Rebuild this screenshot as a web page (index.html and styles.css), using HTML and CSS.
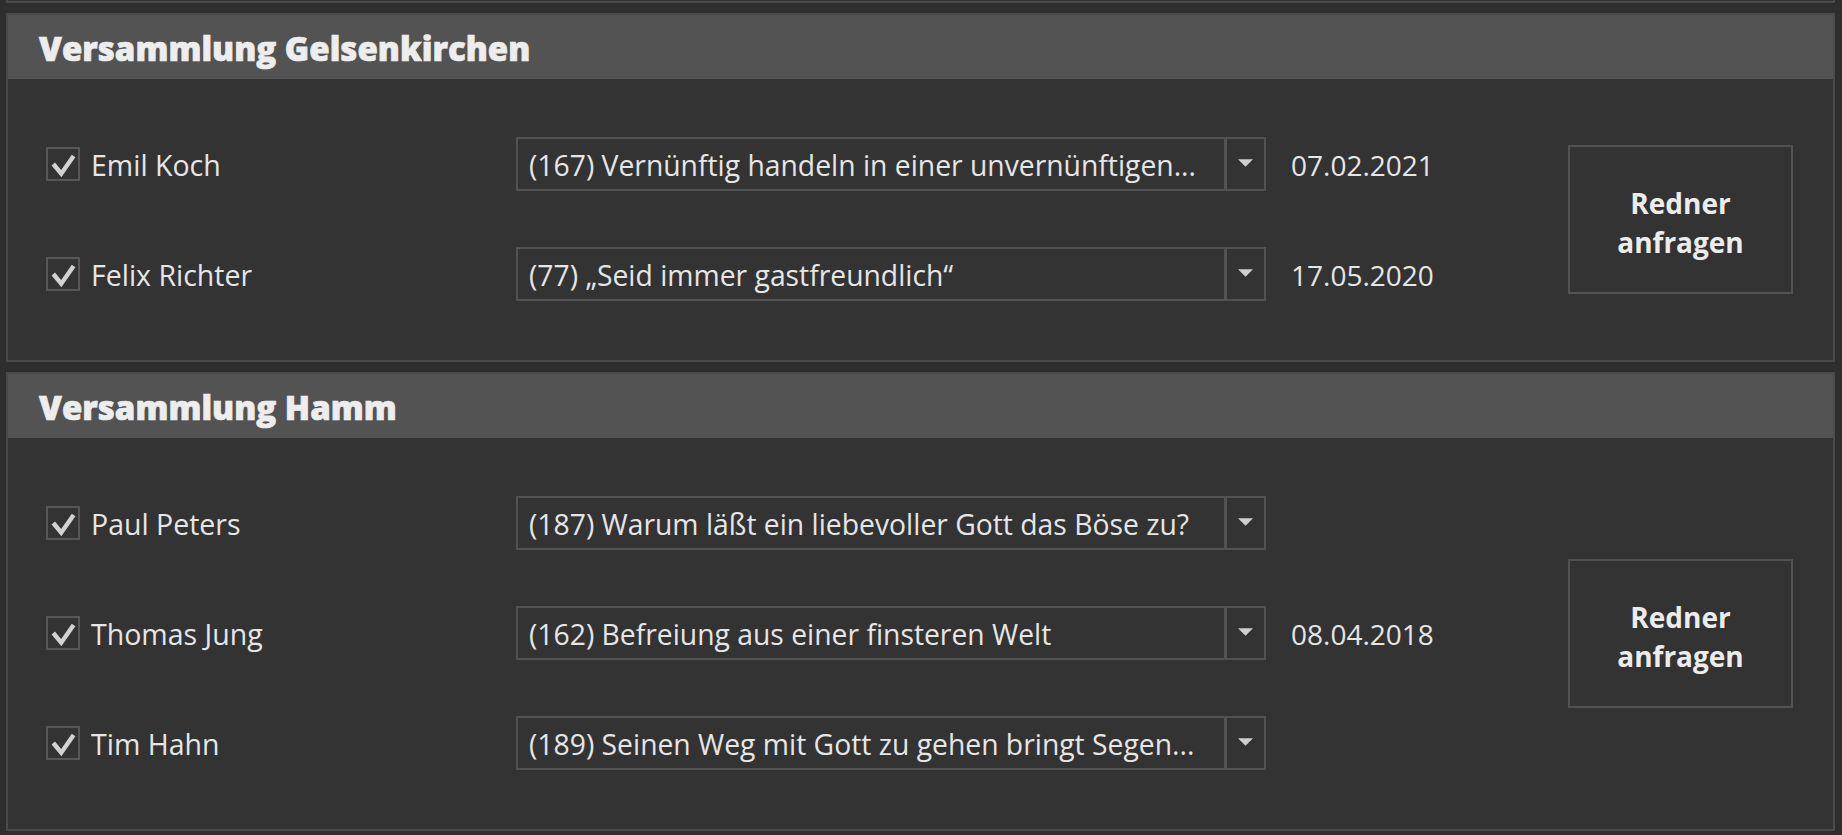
FILE: index.html
```html
<!DOCTYPE html>
<html lang="de">
<head>
<meta charset="utf-8">
<title>Redner</title>
<link rel="stylesheet" href="styles.css">
</head>
<body>
<div class="page">
  <div class="prev"></div>

  <section class="panel">
    <header class="panel-header">Versammlung Gelsenkirchen</header>
    <div class="panel-body">
      <div class="rows">
        <div class="row">
          <label class="who">
            <span class="check"><svg viewBox="0 0 34 34" width="30" height="30"><polyline points="6,17 15,28 29,8" /></svg></span>
            <span class="name">Emil Koch</span>
          </label>
          <div class="combo">
            <span class="combo-text">(167) Vernünftig handeln in einer unvernünftigen...</span>
            <span class="combo-btn"><svg viewBox="0 0 16 8" width="15" height="8"><polygon points="0,0 16,0 8,8" /></svg></span>
          </div>
          <span class="date">07.02.2021</span>
        </div>
        <div class="row">
          <label class="who">
            <span class="check"><svg viewBox="0 0 34 34" width="30" height="30"><polyline points="6,17 15,28 29,8" /></svg></span>
            <span class="name">Felix Richter</span>
          </label>
          <div class="combo">
            <span class="combo-text">(77) „Seid immer gastfreundlich“</span>
            <span class="combo-btn"><svg viewBox="0 0 16 8" width="15" height="8"><polygon points="0,0 16,0 8,8" /></svg></span>
          </div>
          <span class="date">17.05.2020</span>
        </div>
      </div>
      <button class="request">Redner<br>anfragen</button>
    </div>
  </section>

  <section class="panel">
    <header class="panel-header">Versammlung Hamm</header>
    <div class="panel-body">
      <div class="rows">
        <div class="row">
          <label class="who">
            <span class="check"><svg viewBox="0 0 34 34" width="30" height="30"><polyline points="6,17 15,28 29,8" /></svg></span>
            <span class="name">Paul Peters</span>
          </label>
          <div class="combo">
            <span class="combo-text">(187) Warum läßt ein liebevoller Gott das Böse zu?</span>
            <span class="combo-btn"><svg viewBox="0 0 16 8" width="15" height="8"><polygon points="0,0 16,0 8,8" /></svg></span>
          </div>
        </div>
        <div class="row">
          <label class="who">
            <span class="check"><svg viewBox="0 0 34 34" width="30" height="30"><polyline points="6,17 15,28 29,8" /></svg></span>
            <span class="name">Thomas Jung</span>
          </label>
          <div class="combo">
            <span class="combo-text">(162) Befreiung aus einer finsteren Welt</span>
            <span class="combo-btn"><svg viewBox="0 0 16 8" width="15" height="8"><polygon points="0,0 16,0 8,8" /></svg></span>
          </div>
          <span class="date">08.04.2018</span>
        </div>
        <div class="row">
          <label class="who">
            <span class="check"><svg viewBox="0 0 34 34" width="30" height="30"><polyline points="6,17 15,28 29,8" /></svg></span>
            <span class="name">Tim Hahn</span>
          </label>
          <div class="combo">
            <span class="combo-text">(189) Seinen Weg mit Gott zu gehen bringt Segen...</span>
            <span class="combo-btn"><svg viewBox="0 0 16 8" width="15" height="8"><polygon points="0,0 16,0 8,8" /></svg></span>
          </div>
        </div>
      </div>
      <button class="request">Redner<br>anfragen</button>
    </div>
  </section>
</div>
</body>
</html>
```
FILE: styles.css
```css
html, body {
  margin: 0;
  padding: 0;
  background: #2e2e2e;
}
body {
  font-family: "Open Sans", "Noto Sans", sans-serif;
  color: #e6e6e6;
}
.page {
  display: flex;
  flex-direction: column;
  gap: 10px;
  padding: 0 7px 0 6px;
}
.prev {
  height: 1px;
  border: 2px solid #4a4a4a;
  border-top: none;
  background: #333333;
}
.panel {
  border: 2px solid #4a4a4a;
  background: #333333;
}
.panel-header {
  height: 64px;
  background: #535353;
  display: flex;
  align-items: center;
  padding-left: 31px;
  padding-top: 2px;
  box-sizing: border-box;
  font-size: 33px;
  font-weight: 800;
  color: #ededed;
  -webkit-text-stroke: 0.7px #ededed;
}
.panel-body {
  display: flex;
  align-items: center;
  padding: 58px 40px 59px 38px;
}
.rows {
  flex: 1;
  display: flex;
  flex-direction: column;
  gap: 56px;
}
.row {
  display: flex;
  align-items: center;
  height: 54px;
}
.who {
  width: 470px;
  display: flex;
  align-items: center;
  gap: 11px;
}
.check {
  width: 30px;
  height: 30px;
  border: 2px solid #575757;
  display: flex;
  align-items: center;
  justify-content: center;
  flex: none;
}
.check polyline {
  fill: none;
  stroke: #d2d2d2;
  stroke-width: 5;
  stroke-linejoin: miter;
}
.name {
  font-size: 28.5px;
  white-space: nowrap;
  padding-top: 2px;
}
.combo {
  width: 750px;
  height: 54px;
  box-sizing: border-box;
  border: 2px solid #525252;
  display: flex;
  align-items: stretch;
}
.combo-text {
  flex: 1;
  display: flex;
  align-items: center;
  padding-left: 11px;
  padding-top: 2px;
  font-size: 28.3px;
  white-space: nowrap;
  overflow: hidden;
}
.combo-btn {
  width: 37px;
  border-left: 3px solid #525252;
  display: flex;
  align-items: center;
  justify-content: center;
  padding-bottom: 3px;
}
.combo-btn polygon {
  fill: #cfcfcf;
}
.date {
  margin-left: 25px;
  font-size: 28px;
  padding-top: 2px;
}
.request {
  width: 225px;
  height: 149px;
  box-sizing: border-box;
  background: transparent;
  border: 2px solid #525252;
  color: #ececec;
  font-family: "Open Sans", "Noto Sans", sans-serif;
  font-weight: 700;
  font-size: 28px;
  line-height: 39px;
  padding: 7px 0 0;
  flex: none;
}
```
